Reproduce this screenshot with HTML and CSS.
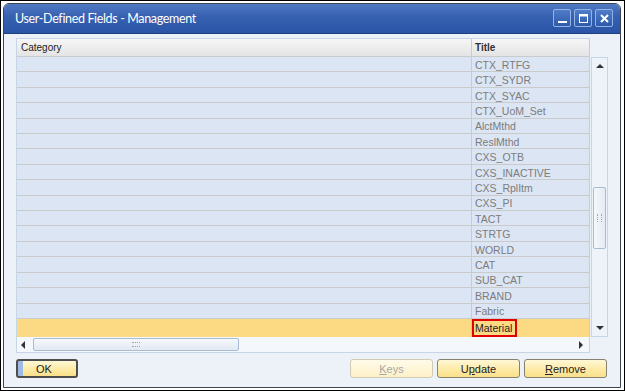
FILE: index.html
```html
<!DOCTYPE html>
<html lang="en">

<head>
    <meta charset="UTF-8">
    <title>User-Defined Fields - Management</title>
    <link rel="stylesheet" href="styles.css">
</head>

<body>
    <div class="frame">
        <div class="window">
            <div class="titlebar">
                <span class="title">User-Defined Fields - Management</span>
                <div class="controls">
                    <span class="ctl"><svg width="11" height="11" viewBox="0 0 11 11"><rect x="1" y="8" width="9" height="2" fill="#fff"/></svg></span>
                    <span class="ctl"><svg width="11" height="11" viewBox="0 0 11 11"><rect x="1.5" y="1.5" width="8" height="8" fill="none" stroke="#fff" stroke-width="1"/><rect x="1" y="1" width="9" height="2.5" fill="#fff"/></svg></span>
                    <span class="ctl"><svg width="11" height="11" viewBox="0 0 11 11"><path d="M2 2 L9 9 M9 2 L2 9" stroke="#fff" stroke-width="2"/></svg></span>
                </div>
            </div>

            <div class="content">
                <div class="grid">
                    <div class="header">
                        <div class="cell cat">Category</div>
                        <div class="cell ttl">Title</div>
                    </div>
                    <div class="header-gap"></div>

                    <div class="rows">
                        <div class="row"><div class="cell cat"></div><div class="cell ttl">CTX_RTFG</div></div>
                        <div class="row"><div class="cell cat"></div><div class="cell ttl">CTX_SYDR</div></div>
                        <div class="row"><div class="cell cat"></div><div class="cell ttl">CTX_SYAC</div></div>
                        <div class="row"><div class="cell cat"></div><div class="cell ttl">CTX_UoM_Set</div></div>
                        <div class="row"><div class="cell cat"></div><div class="cell ttl">AlctMthd</div></div>
                        <div class="row"><div class="cell cat"></div><div class="cell ttl">ReslMthd</div></div>
                        <div class="row"><div class="cell cat"></div><div class="cell ttl">CXS_OTB</div></div>
                        <div class="row"><div class="cell cat"></div><div class="cell ttl">CXS_INACTIVE</div></div>
                        <div class="row"><div class="cell cat"></div><div class="cell ttl">CXS_RplItm</div></div>
                        <div class="row"><div class="cell cat"></div><div class="cell ttl">CXS_PI</div></div>
                        <div class="row"><div class="cell cat"></div><div class="cell ttl">TACT</div></div>
                        <div class="row"><div class="cell cat"></div><div class="cell ttl">STRTG</div></div>
                        <div class="row"><div class="cell cat"></div><div class="cell ttl">WORLD</div></div>
                        <div class="row"><div class="cell cat"></div><div class="cell ttl">CAT</div></div>
                        <div class="row"><div class="cell cat"></div><div class="cell ttl">SUB_CAT</div></div>
                        <div class="row"><div class="cell cat"></div><div class="cell ttl">BRAND</div></div>
                        <div class="row"><div class="cell cat"></div><div class="cell ttl">Fabric</div></div>
                        <div class="row selected"><div class="cell cat"></div><div class="cell ttl"><span class="marked">Material</span></div></div>
                    </div>

                    <div class="vscroll">
                        <span class="arrow up"></span>
                        <div class="vtrack">
                            <div class="vthumb"><span class="grip-v"></span></div>
                        </div>
                        <span class="arrow down"></span>
                    </div>

                    <div class="hscroll">
                        <span class="arrow left"></span>
                        <div class="hthumb"><span class="grip-h"></span></div>
                        <span class="arrow right"></span>
                    </div>
                    <div class="corner"></div>
                </div>

                <div class="buttons">
                    <button type="button" class="btn btn-ok">OK</button>
                    <div class="btn-group">
                        <button type="button" class="btn btn-wide" disabled><u>K</u>eys</button>
                        <button type="button" class="btn btn-wide">U<u>p</u>date</button>
                        <button type="button" class="btn btn-wide"><u>R</u>emove</button>
                    </div>
                </div>
            </div>
        </div>
    </div>
</body>

</html>
```

FILE: styles.css
```css
html,
body {
    margin: 0;
    padding: 0;
    background: #fff;
}

body {
    font-family: "Liberation Sans", Arial, sans-serif;
    font-size: 10px;
}

.frame {
    width: 625px;
    height: 391px;
    box-sizing: border-box;
    border: 1px solid #000;
    padding: 2px 3px 2px 2px;
    background: #fff;
}

.window {
    width: 618px;
    height: 385px;
    box-sizing: border-box;
    border: 1px solid #3c4450;
    border-radius: 6px 6px 0 0;
    background: #edf2f9;
    display: flex;
    flex-direction: column;
    overflow: hidden;
}

.titlebar {
    height: 29px;
    flex: none;
    background: linear-gradient(#5079c4, #3660b0 45%, #2a55a6);
    border-bottom: 1px solid #1f3f7c;
    display: flex;
    align-items: center;
    justify-content: space-between;
    padding: 0 7px 0 11px;
}

.title {
    color: #fff;
    font-family: Lato, "Open Sans", sans-serif;
    font-size: 12.5px;
    letter-spacing: -0.35px;
}

.controls {
    display: flex;
    gap: 3px;
    margin-top: -1px;
}

.ctl {
    width: 18px;
    height: 18px;
    box-sizing: border-box;
    border: 1px solid #95b4e6;
    border-radius: 2px;
    background: linear-gradient(#4f7dca, #2d5aaa);
    display: flex;
    align-items: center;
    justify-content: center;
}

.content {
    flex: 1;
    padding: 4px 9px 0 12px;
    display: flex;
    flex-direction: column;
}

.grid {
    display: grid;
    grid-template-columns: 574px 18px;
    grid-template-rows: 19px 280px 16px;
}

.header {
    display: flex;
    background: linear-gradient(#f6f6f6, #e4e4e4);
    border-top: 1px solid #c7d5e8;
    border-left: 1px solid #c7d5e8;
    border-bottom: 1px solid #c9cccf;
    box-sizing: border-box;
}

.header .cell {
    color: #222;
    line-height: 17px;
}

.header .ttl {
    font-weight: bold;
    color: #333;
}

.cell {
    box-sizing: border-box;
    padding-left: 4px;
    white-space: nowrap;
    overflow: hidden;
}

.cat {
    width: 455px;
    border-right: 1px solid #c9cccf;
}

.ttl {
    flex: 1;
    padding-left: 3px;
    border-right: 1px solid #c9cccf;
}

.rows {
    display: flex;
    flex-direction: column;
    border-left: 1px solid #c7d5e8;
}

.row {
    flex: 1;
    display: flex;
    background: #dbe5f3;
    border-bottom: 1px solid #c8cbc9;
}

.row:last-child {
    border-bottom: none;
}

.row .cell {
    color: #7c7c7c;
    display: flex;
    align-items: center;
    font-size: 10.5px;
    padding-top: 1px;
}

.row.selected {
    background: #fcd983;
}

.row.selected .cell {
    color: #222;
    padding-top: 0;
}

.row.selected .ttl {
    padding-left: 0;
}

.marked {
    border: 2px solid #e30000;
    padding: 1px 3px 1px 1px;
    line-height: 12px;
}

.vscroll {
    grid-column: 2;
    grid-row: 2;
    margin-left: 1px;
    background: #eef3fa;
    border: 1px solid #c7d5e8;
    display: flex;
    flex-direction: column;
    align-items: center;
    box-sizing: border-box;
}

.vtrack {
    flex: 1;
    width: 100%;
    padding-top: 119px;
    box-sizing: border-box;
}

.vthumb {
    height: 62px;
    margin: 0 1px;
    box-sizing: border-box;
    border: 1px solid #a9bbd3;
    border-radius: 2px;
    background: linear-gradient(90deg, #f5f8fc, #e4ebf4);
    display: flex;
    align-items: center;
    justify-content: center;
}

.grip-v {
    width: 3px;
    height: 8px;
    border-left: 1px dotted #9aa6b6;
    border-right: 1px dotted #9aa6b6;
}

.hscroll {
    grid-column: 1;
    grid-row: 3;
    display: flex;
    align-items: center;
    background: #f4f7fb;
    border: 1px solid #c7d5e8;
    border-top: none;
    box-sizing: border-box;
    padding: 0 4px;
}

.hthumb {
    width: 206px;
    height: 13px;
    margin-left: 8px;
    box-sizing: border-box;
    border: 1px solid #a9bbd3;
    border-radius: 2px;
    background: linear-gradient(#f5f8fc, #e2e9f2);
    display: flex;
    align-items: center;
    justify-content: center;
}

.grip-h {
    width: 8px;
    height: 3px;
    border-top: 1px dotted #9aa6b6;
    border-bottom: 1px dotted #9aa6b6;
}

.hscroll .right {
    margin-left: auto;
}

.arrow {
    width: 0;
    height: 0;
    border-style: solid;
    border-color: transparent;
    flex: none;
}

.arrow.up {
    margin: 6px 0 0;
    border-width: 0 4px 4px;
    border-bottom-color: #333;
}

.arrow.down {
    margin: 0 0 6px;
    border-width: 4px 4px 0;
    border-top-color: #333;
}

.arrow.left {
    border-width: 4px 4px 4px 0;
    border-right-color: #333;
}

.arrow.right {
    border-width: 4px 0 4px 4px;
    border-left-color: #333;
    margin-right: 2px;
}

.buttons {
    display: flex;
    justify-content: space-between;
    margin-top: 6px;
    padding-right: 4px;
}

.btn-group {
    display: flex;
    gap: 4px;
}

.btn {
    height: 19px;
    box-sizing: border-box;
    border: 1px solid #85826f;
    border-radius: 3px;
    background: linear-gradient(#fff8d6, #fde9a2 60%, #fbe08c);
    color: #222;
    font-family: "Liberation Sans", Arial, sans-serif;
    font-size: 11px;
    padding: 0;
    line-height: 16px;
}

.btn u {
    text-decoration: underline;
}

.btn-ok {
    width: 62px;
    border: 2px solid #4e4e4e;
    background: linear-gradient(90deg, #9fbbe4 0, #9fbbe4 5px, transparent 5px),
        linear-gradient(#fff8d6, #fde9a2 60%, #fbe08c);
    padding-right: 6px;
}

.btn-wide {
    width: 83px;
}

.btn[disabled] {
    color: #a8a8a8;
    border-color: #cfcbb4;
    background: linear-gradient(#fffbe9, #fdf1c8);
}
```
